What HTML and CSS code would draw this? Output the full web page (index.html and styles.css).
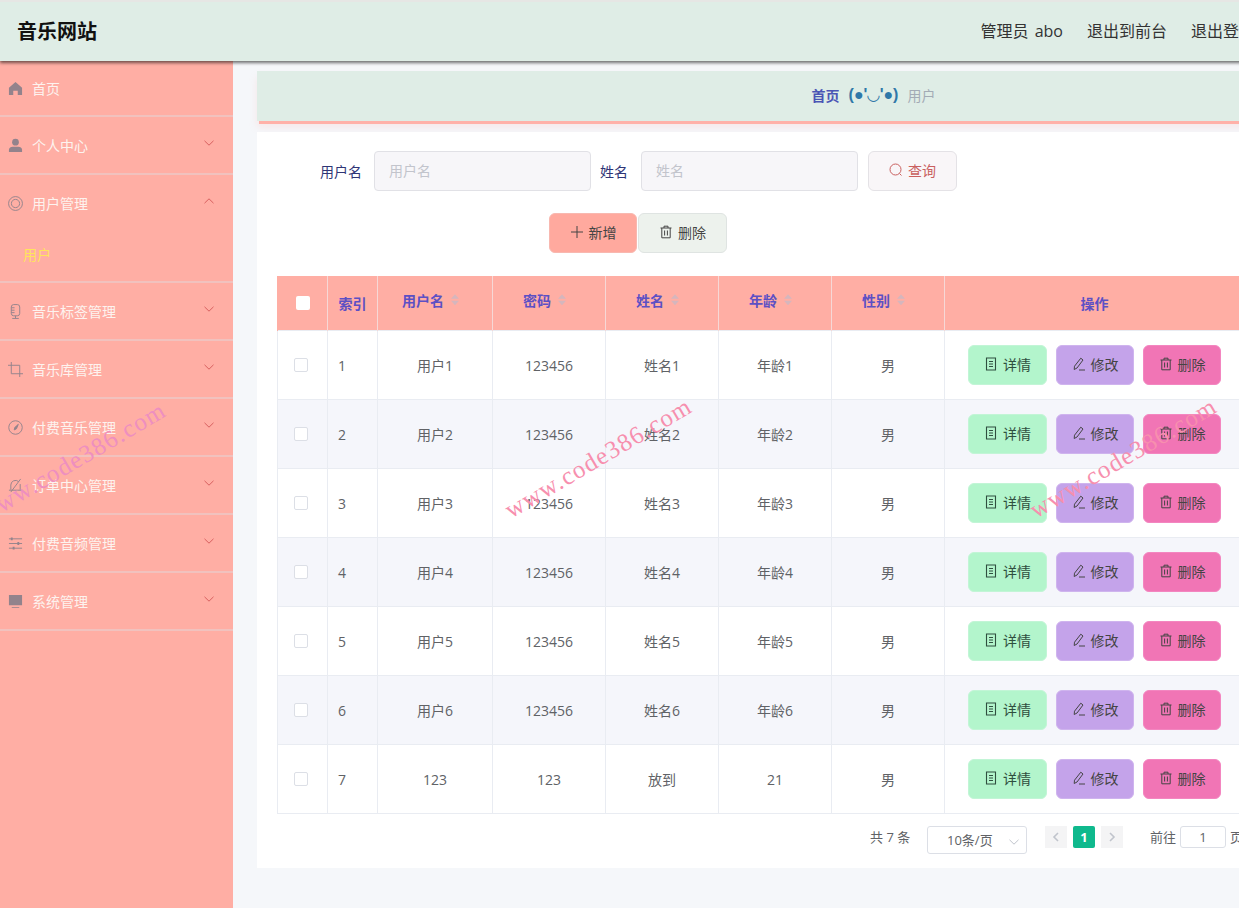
FILE: index.html
```html
<!DOCTYPE html>
<html lang="zh">
<head>
<meta charset="utf-8">
<title>音乐网站</title>
<link rel="stylesheet" href="styles.css">
</head>
<body>
<svg class="sprite" aria-hidden="true">
  <symbol id="i-chev" viewBox="0 0 12 12"><path d="M1.5 3.8 6 8.2l4.5-4.4" fill="none" stroke="currentColor" stroke-width="1"/></symbol>
  <symbol id="i-up" viewBox="0 0 12 12"><path d="M1.5 8.2 6 3.8l4.5 4.4" fill="none" stroke="currentColor" stroke-width="1"/></symbol>
  <symbol id="i-doc" viewBox="0 0 14 14"><path d="M2.5 1h9v12h-9zM5 4.5h4M5 7h4M5 9.5h4" fill="none" stroke="currentColor" stroke-width="1.1"/></symbol>
  <symbol id="i-edit" viewBox="0 0 14 14"><path d="M8.8 1.2 11 3 5 11 2.2 12.5 2.5 9.2zM7 13h6" fill="none" stroke="currentColor" stroke-width="1"/></symbol>
  <symbol id="i-trash" viewBox="0 0 14 14"><path d="M1.5 3h11M5 3V1.2h4V3M2.8 3v9.8h8.4V3M5.6 5.5v5M8.4 5.5v5" fill="none" stroke="currentColor" stroke-width="1"/></symbol>
</svg>

<div class="app">
  <header class="topbar">
    <div class="brand">音乐网站</div>
    <nav class="topnav">
      <span>管理员 abo</span>
      <span>退出到前台</span>
      <span>退出登录</span>
    </nav>
  </header>

  <div class="body">
    <aside class="sidebar">
      <div class="item item-first">
        <svg class="ico" viewBox="0 0 16 16"><path d="M8 1 1 7.2V15h4.6v-4.6h4.8V15H15V7.2z" fill="currentColor"/></svg>
        <span>首页</span>
      </div>
      <div class="item">
        <svg class="ico" viewBox="0 0 16 16"><circle cx="8" cy="4.4" r="3.6" fill="currentColor"/><path d="M1 15v-2.4C1 10.4 3 9.4 5 9.4h6c2 0 4 1 4 3.2V15z" fill="currentColor"/></svg>
        <span>个人中心</span>
        <svg class="chev"><use href="#i-chev"/></svg>
      </div>
      <div class="group">
        <div class="item item-open">
          <svg class="ico" viewBox="0 0 16 16" fill="none" stroke="currentColor"><circle cx="8" cy="8" r="7.4"/><circle cx="8" cy="8" r="4.4"/></svg>
          <span>用户管理</span>
          <svg class="chev"><use href="#i-up"/></svg>
        </div>
        <div class="subitem">用户</div>
      </div>
      <div class="item">
        <svg class="ico" viewBox="0 0 16 16" fill="none" stroke="currentColor"><rect x="3.5" y="0.6" width="9" height="12" rx="2.6"/><path d="M3.5 4h3.5M3.5 6.6h3.5M3.5 9.2h3.5M8 12.6v2.6M4.5 15.4h7"/></svg>
        <span>音乐标签管理</span>
        <svg class="chev"><use href="#i-chev"/></svg>
      </div>
      <div class="item">
        <svg class="ico" viewBox="0 0 16 16" fill="none" stroke="currentColor"><path d="M3.5 0v12.5H16M0 3.5h12.5V16"/></svg>
        <span>音乐库管理</span>
        <svg class="chev"><use href="#i-chev"/></svg>
      </div>
      <div class="item">
        <svg class="ico" viewBox="0 0 16 16" fill="none" stroke="currentColor"><circle cx="8" cy="8" r="7.2"/><path d="M11 4.6 9 9.4 6.6 10.6 7.2 8z" fill="currentColor"/></svg>
        <span>付费音乐管理</span>
        <svg class="chev"><use href="#i-chev"/></svg>
      </div>
      <div class="item">
        <svg class="ico" viewBox="0 0 16 16" fill="none" stroke="currentColor"><path d="M3 12.5V7.5a5 5 0 0 1 8.4-3.6M13 6.5v6M1 13h14M13.5 1 3 15"/></svg>
        <span>订单中心管理</span>
        <svg class="chev"><use href="#i-chev"/></svg>
      </div>
      <div class="item">
        <svg class="ico" viewBox="0 0 16 16" fill="none" stroke="currentColor"><path d="M1 3h14M1 8h14M1 13h14"/><path d="M4 1.5v3M11 6.5v3M6 11.5v3" stroke-width="2"/></svg>
        <span>付费音频管理</span>
        <svg class="chev"><use href="#i-chev"/></svg>
      </div>
      <div class="item">
        <svg class="ico" viewBox="0 0 16 16"><path d="M1 1h14v11H1zM4 14h8v1H4z" fill="currentColor"/></svg>
        <span>系统管理</span>
        <svg class="chev"><use href="#i-chev"/></svg>
      </div>
    </aside>

    <main class="main">
      <div class="crumb">
        <b class="crumb-home">首页</b>
        <b class="crumb-face">(●'◡'●)</b>
        <span class="crumb-cur">用户</span>
      </div>

      <section class="card">
        <form class="search">
          <label class="lab lab-user">用户名</label>
          <div class="inp">用户名</div>
          <label class="lab lab-name">姓名</label>
          <div class="inp">姓名</div>
          <div class="btn btn-query">
            <svg class="bi" viewBox="0 0 14 14" fill="none" stroke="currentColor"><circle cx="6.5" cy="6.5" r="5.5"/><path d="m10.5 10.5 2 2"/></svg>
            查询
          </div>
        </form>

        <div class="actions">
          <div class="btn btn-add">
            <svg class="bi" viewBox="0 0 14 14" fill="none" stroke="currentColor"><path d="M7 1v12M1 7h12"/></svg>
            新增
          </div>
          <div class="btn btn-del">
            <svg class="bi"><use href="#i-trash"/></svg>
            删除
          </div>
        </div>

        <table class="grid">
          <colgroup>
            <col class="c-check"><col class="c-index"><col class="c-user"><col class="c-std"><col class="c-std"><col class="c-std"><col class="c-std"><col class="c-ops">
          </colgroup>
          <thead>
            <tr>
              <th><i class="hcheck"></i></th>
              <th>索引</th>
              <th><span class="sort">用户名<i class="carets"></i></span></th>
              <th><span class="sort">密码<i class="carets"></i></span></th>
              <th><span class="sort">姓名<i class="carets"></i></span></th>
              <th><span class="sort">年龄<i class="carets"></i></span></th>
              <th><span class="sort">性别<i class="carets"></i></span></th>
              <th>操作</th>
            </tr>
          </thead>
          <tbody>
            <tr><td><i class="check"></i></td><td class="idx">1</td><td>用户1</td><td class="num">123456</td><td>姓名1</td><td>年龄1</td><td>男</td>
              <td><div class="ops"><div class="btn op op-view"><svg class="bi"><use href="#i-doc"/></svg>详情</div><div class="btn op op-edit"><svg class="bi"><use href="#i-edit"/></svg>修改</div><div class="btn op op-del"><svg class="bi"><use href="#i-trash"/></svg>删除</div></div></td></tr>
            <tr><td><i class="check"></i></td><td class="idx">2</td><td>用户2</td><td class="num">123456</td><td>姓名2</td><td>年龄2</td><td>男</td>
              <td><div class="ops"><div class="btn op op-view"><svg class="bi"><use href="#i-doc"/></svg>详情</div><div class="btn op op-edit"><svg class="bi"><use href="#i-edit"/></svg>修改</div><div class="btn op op-del"><svg class="bi"><use href="#i-trash"/></svg>删除</div></div></td></tr>
            <tr><td><i class="check"></i></td><td class="idx">3</td><td>用户3</td><td class="num">123456</td><td>姓名3</td><td>年龄3</td><td>男</td>
              <td><div class="ops"><div class="btn op op-view"><svg class="bi"><use href="#i-doc"/></svg>详情</div><div class="btn op op-edit"><svg class="bi"><use href="#i-edit"/></svg>修改</div><div class="btn op op-del"><svg class="bi"><use href="#i-trash"/></svg>删除</div></div></td></tr>
            <tr><td><i class="check"></i></td><td class="idx">4</td><td>用户4</td><td class="num">123456</td><td>姓名4</td><td>年龄4</td><td>男</td>
              <td><div class="ops"><div class="btn op op-view"><svg class="bi"><use href="#i-doc"/></svg>详情</div><div class="btn op op-edit"><svg class="bi"><use href="#i-edit"/></svg>修改</div><div class="btn op op-del"><svg class="bi"><use href="#i-trash"/></svg>删除</div></div></td></tr>
            <tr><td><i class="check"></i></td><td class="idx">5</td><td>用户5</td><td class="num">123456</td><td>姓名5</td><td>年龄5</td><td>男</td>
              <td><div class="ops"><div class="btn op op-view"><svg class="bi"><use href="#i-doc"/></svg>详情</div><div class="btn op op-edit"><svg class="bi"><use href="#i-edit"/></svg>修改</div><div class="btn op op-del"><svg class="bi"><use href="#i-trash"/></svg>删除</div></div></td></tr>
            <tr><td><i class="check"></i></td><td class="idx">6</td><td>用户6</td><td class="num">123456</td><td>姓名6</td><td>年龄6</td><td>男</td>
              <td><div class="ops"><div class="btn op op-view"><svg class="bi"><use href="#i-doc"/></svg>详情</div><div class="btn op op-edit"><svg class="bi"><use href="#i-edit"/></svg>修改</div><div class="btn op op-del"><svg class="bi"><use href="#i-trash"/></svg>删除</div></div></td></tr>
            <tr><td><i class="check"></i></td><td class="idx">7</td><td class="num">123</td><td class="num">123</td><td>放到</td><td class="num">21</td><td>男</td>
              <td><div class="ops"><div class="btn op op-view"><svg class="bi"><use href="#i-doc"/></svg>详情</div><div class="btn op op-edit"><svg class="bi"><use href="#i-edit"/></svg>修改</div><div class="btn op op-del"><svg class="bi"><use href="#i-trash"/></svg>删除</div></div></td></tr>
          </tbody>
        </table>

        <div class="pager">
          <span class="total">共 7 条</span>
          <div class="size">10条/页<svg class="size-chev"><use href="#i-chev"/></svg></div>
          <div class="pg pg-prev"><svg viewBox="0 0 10 12" width="10" height="12"><path d="M7 2 3 6l4 4" fill="none" stroke="currentColor" stroke-width="1.6"/></svg></div>
          <div class="pg pg-on">1</div>
          <div class="pg pg-next"><svg viewBox="0 0 10 12" width="10" height="12"><path d="m3 2 4 4-4 4" fill="none" stroke="currentColor" stroke-width="1.6"/></svg></div>
          <span class="goto">前往</span>
          <div class="jump">1</div>
          <span class="goto-end">页</span>
        </div>
      </section>
    </main>
  </div>

  <div class="wm wm-1">www.code386.com</div>
  <div class="wm wm-2">www.code386.com</div>
  <div class="wm wm-3">www.code386.com</div>
</div>
</body>
</html>
```

FILE: styles.css
```css
* { box-sizing: border-box; }
html, body { margin: 0; height: 908px; overflow: hidden; }
body {
  font-family: "Open Sans", "Noto Sans CJK SC", sans-serif;
  font-size: 14px;
  color: #606266;
  background: #f5f7fa;
}
.sprite { position: absolute; width: 0; height: 0; }
.app { position: relative; width: 1490px; height: 908px; overflow: hidden; }

/* top bar */
.topbar {
  position: relative;
  z-index: 2;
  height: 61px;
  display: flex;
  align-items: center;
  padding: 0 235px 0 17px;
  background: #dfede6;
  border-top: 2px solid #e6e6e4;
  box-shadow: 0 2px 3px rgba(0, 0, 0, .55);
}
.brand { font-size: 20px; font-weight: 700; color: #111; line-height: 28px; }
.topnav { margin-left: auto; padding-bottom: 3px; display: flex; gap: 24px; font-size: 16px; word-spacing: 2px; color: #333; }

.body { display: flex; height: 847px; }

/* sidebar */
.sidebar { width: 233px; flex: none; background: #ffaea4; color: #fff; }
.item {
  height: 58px;
  display: flex;
  align-items: center;
  padding: 0 18px 0 8px;
  border-bottom: 2px solid #f1c2be;
  color: #fdf3ef;
}
.item-first { height: 56px; }
.item-open { border-bottom: 0; padding-bottom: 2px; }
.group { border-bottom: 2px solid #f1c2be; }
.subitem { height: 48px; padding-left: 23px; line-height: 44px; color: #ffe45c; }
.ico { width: 15px; height: 15px; flex: none; margin-right: 9px; color: #93838c; }
.chev { width: 12px; height: 12px; margin: -4px 0 0 auto; color: #d8605f; }

/* main */
.main { width: 1257px; flex: none; padding: 10px 0 0 24px; }
.crumb {
  height: 50px;
  width: 1233px;
  padding-bottom: 3px;
  display: flex;
  align-items: center;
  justify-content: center;
  gap: 9px;
  font-size: 14px;
  background: #dfede6;
  box-shadow: 0 5px 0 -2px #ffb1a8, 0 6px 8px rgba(255, 171, 160, .2);
}
.crumb-home { color: #4a55b5; }
.crumb-face { color: #2f78a8; font-family: "Liberation Sans", "DejaVu Sans", sans-serif; font-size: 16px; }
.crumb-cur { color: #a3abb5; }

.card {
  width: 1233px;
  height: 736px;
  margin-top: 11px;
  padding: 19px 20px 0;
  background: #fff;
}
.search { display: flex; align-items: center; height: 40px; }
.lab { color: #2f3576; }
.lab-user { margin-left: 43px; width: 54px; }
.lab-name { margin-left: 9px; width: 41px; }
.inp {
  width: 217px;
  height: 40px;
  padding: 0 14px;
  line-height: 37px;
  background: #f7f6f9;
  border: 1px solid #e1e1e6;
  border-radius: 4px;
  color: #c2c4cc;
}
.btn {
  height: 40px;
  padding-bottom: 2px;
  display: flex;
  align-items: center;
  justify-content: center;
  border-radius: 6px;
  color: #444;
  border: 1px solid transparent;
}
.bi { width: 14px; height: 14px; flex: none; margin-right: 5px; }
.btn-query {
  width: 89px;
  margin-left: 10px;
  background: #f9f6f8;
  border-color: #e4e2e6;
  color: #c9605f;
}
.actions { display: flex; gap: 1px; height: 40px; margin: 22px 0 23px 272px; }
.btn-add { width: 88px; background: #ffa99e; border-color: #f8b8b0; }
.btn-del { width: 89px; background: #edf2ed; border-color: #dfe4e2; }

/* table */
.grid { width: 967px; table-layout: fixed; border-collapse: collapse; }
.c-check, .c-index { width: 50px; }
.c-user { width: 115px; }
.c-std { width: 113px; }
.c-ops { width: 300px; }
.grid th {
  height: 54px;
  padding: 0;
  background: #ffaea4;
  color: #5c50c4;
  font-weight: 700;
  font-size: 14px;
  text-align: center;
  border: 1px solid #f6d8d6;
  border-width: 0 1px 0 0;
}
.grid th:first-child { border-left: 1px solid #ffaea4; }
.grid td {
  height: 69px;
  padding: 0;
  text-align: center;
  border: 1px solid #e9ecf2;
}
.grid tbody tr:nth-child(even) td { background: #f5f6fb; }
.grid td.num { padding-top: 2px; }
.grid td.idx { text-align: left; padding: 2px 0 0 10px; }
.hcheck, .check { display: block; width: 14px; height: 14px; border-radius: 2px; }
.hcheck { margin-left: 18px; background: #fff; }
.check { margin-left: 16px; background: #fff; border: 1px solid #dcdfe6; }
.sort { position: relative; top: -3px; display: inline-flex; align-items: center; }
.carets {
  width: 10px;
  height: 11px;
  margin: 0 8px 0 6px;
  background: #d5b6bd;
  clip-path: polygon(50% 0, 90% 42%, 10% 42%, 50% 0, 50% 100%, 10% 58%, 90% 58%, 50% 100%);
}
.ops { display: flex; padding-left: 23px; }
.op { height: 40px; }
.op-view { width: 79px; margin-right: 9px; background: #b3f5cc; border-color: #c2f5d6; color: #2f4f3f; }
.op-edit { width: 78px; margin-right: 9px; background: #c4a3ea; border-color: #cfb4ee; }
.op-del { width: 78px; background: #f175b5; border-color: #f386c0; }

/* pager */
.pager { display: flex; align-items: flex-start; height: 28px; margin: 12px 0 0 593px; font-size: 13px; }
.total { line-height: 22px; width: 57px; }
.size {
  position: relative;
  width: 100px;
  height: 28px;
  padding-left: 19px;
  line-height: 26px;
  border: 1px solid #dcdfe6;
  border-radius: 3px;
}
.size-chev { position: absolute; right: 6px; top: 9px; width: 12px; height: 12px; color: #c0c4cc; }
.pg {
  width: 22px;
  height: 22px;
  display: flex;
  align-items: center;
  justify-content: center;
  background: #f4f4f5;
  color: #c0c4cc;
}
.pg-prev { margin-left: 18px; }
.pg-on { margin: 0 6px; background: #0fb98d; color: #fff; font-weight: 700; border-radius: 2px; }
.goto { margin-left: 27px; width: 30px; line-height: 22px; }
.jump {
  width: 46px;
  height: 22px;
  line-height: 20px;
  text-align: center;
  border: 1px solid #dcdfe6;
  border-radius: 3px;
}
.goto-end { margin-left: 4px; line-height: 22px; }

/* watermark overlay */
.wm {
  position: absolute;
  z-index: 3;
  width: 216px;
  font-family: "Liberation Serif", serif;
  font-size: 25px;
  letter-spacing: 1.3px;
  line-height: 28px;
  white-space: nowrap;
  color: #f78fae;
  transform: rotate(-30.5deg);
  pointer-events: none;
}
.wm-1 { left: -34px; top: 447px; color: #ee8fc0; }
.wm-2 { left: 492px; top: 443px; }
.wm-3 { left: 1017px; top: 443px; }
```
